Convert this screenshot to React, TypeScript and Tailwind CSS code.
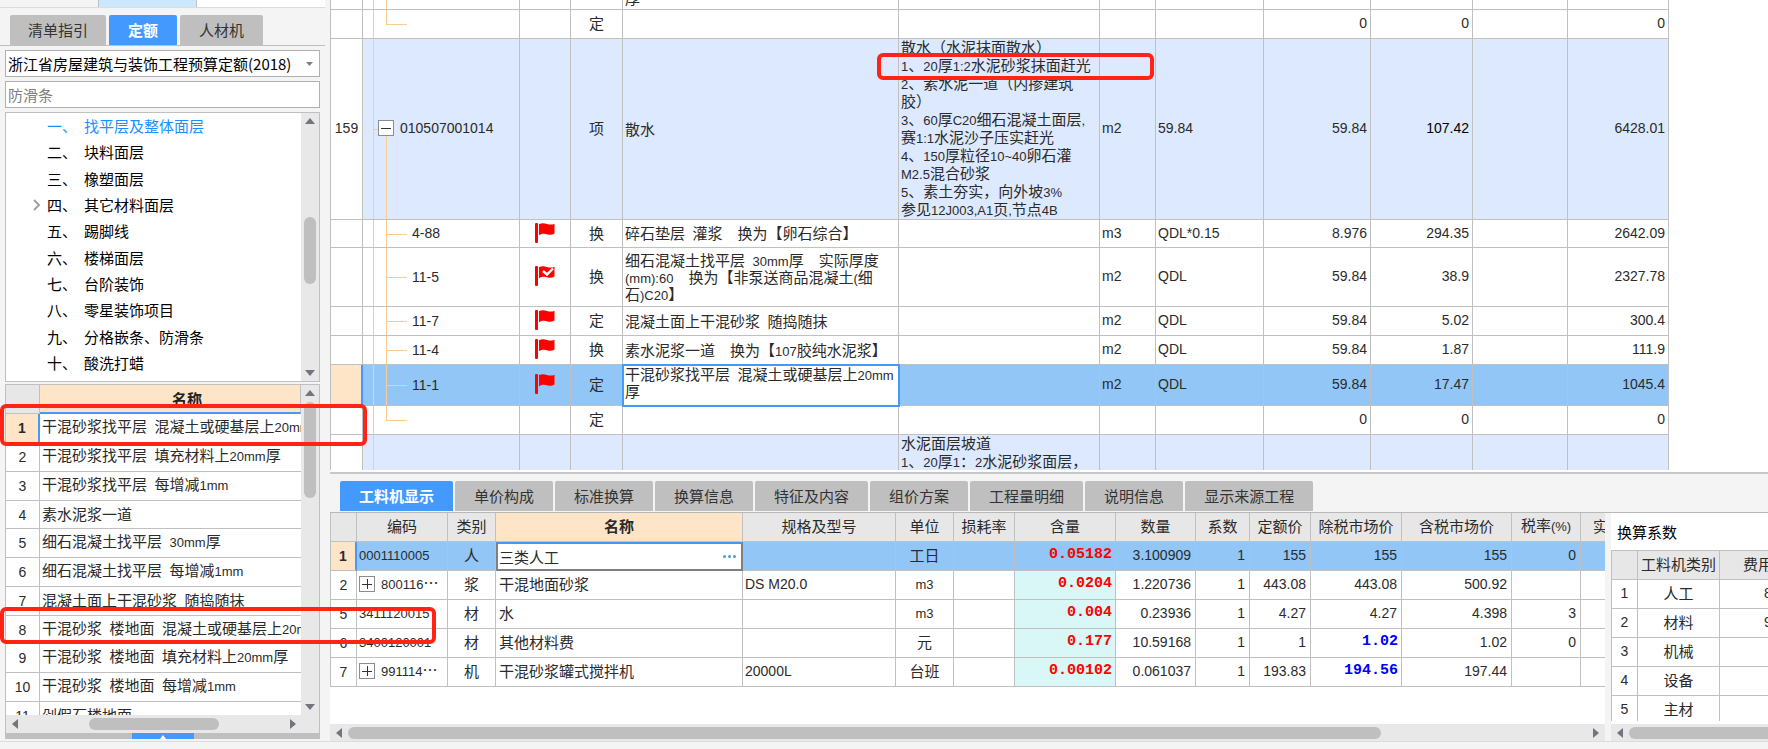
import { ReactNode, useState } from "react";
import clsx from "clsx";

const treeItems = [
  { no: "一、", name: "找平层及整体面层", active: true },
  { no: "二、", name: "块料面层" },
  { no: "三、", name: "橡塑面层" },
  { no: "四、", name: "其它材料面层", expandable: true },
  { no: "五、", name: "踢脚线" },
  { no: "六、", name: "楼梯面层" },
  { no: "七、", name: "台阶装饰" },
  { no: "八、", name: "零星装饰项目" },
  { no: "九、", name: "分格嵌条、防滑条" },
  { no: "十、", name: "酸洗打蜡" },
];

const quotas = [
  "干混砂浆找平层\u2002混凝土或硬基层上20mm",
  "干混砂浆找平层\u2002填充材料上20mm厚",
  "干混砂浆找平层\u2002每增减1mm",
  "素水泥浆一道",
  "细石混凝土找平层\u200230mm厚",
  "细石混凝土找平层\u2002每增减1mm",
  "混凝土面上干混砂浆\u2002随捣随抹",
  "干混砂浆\u2002楼地面\u2002混凝土或硬基层上20m",
  "干混砂浆\u2002楼地面\u2002填充材料上20mm厚",
  "干混砂浆\u2002楼地面\u2002每增减1mm",
  "剁假石楼地面",
];

type BillRow = {
  h: string;
  kind: "last" | "bill" | "child" | "next";
  no?: string;
  code?: string;
  flag?: "plain" | "checked";
  type?: string;
  name?: string[];
  feature?: string[];
  unit?: string;
  expr?: string;
  qty?: string;
  price?: string;
  total?: string;
  selected?: boolean;
};

const billRows: BillRow[] = [
  { h: "h-[29px]", kind: "last", type: "定", qty: "0", price: "0", total: "0" },
  {
    h: "h-[181px]",
    kind: "bill",
    no: "159",
    code: "010507001014",
    type: "项",
    name: ["散水"],
    feature: [
      "散水（水泥抹面散水）",
      "1、20厚1:2水泥砂浆抹面赶光",
      "2、素水泥一道（内掺建筑",
      "胶）",
      "3、60厚C20细石混凝土面层,",
      "赛1:1水泥沙子压实赶光",
      "4、150厚粒径10~40卵石灌",
      "M2.5混合砂浆",
      "5、素土夯实，向外坡3%",
      "参见12J003,A1页,节点4B",
    ],
    unit: "m2",
    expr: "59.84",
    qty: "59.84",
    price: "107.42",
    total: "6428.01",
  },
  {
    h: "h-[28px]", kind: "child", code: "4-88", flag: "plain", type: "换",
    name: ["碎石垫层\u2002灌浆　换为【卵石综合】"],
    unit: "m3", expr: "QDL*0.15", qty: "8.976", price: "294.35", total: "2642.09",
  },
  {
    h: "h-[59px]", kind: "child", code: "11-5", flag: "checked", type: "换",
    name: ["细石混凝土找平层\u200230mm厚　实际厚度", "(mm):60　换为【非泵送商品混凝土(细", "石)C20】"],
    unit: "m2", expr: "QDL", qty: "59.84", price: "38.9", total: "2327.78",
  },
  {
    h: "h-[29px]", kind: "child", code: "11-7", flag: "plain", type: "定",
    name: ["混凝土面上干混砂浆\u2002随捣随抹"],
    unit: "m2", expr: "QDL", qty: "59.84", price: "5.02", total: "300.4",
  },
  {
    h: "h-[29px]", kind: "child", code: "11-4", flag: "plain", type: "换",
    name: ["素水泥浆一道　换为【107胶纯水泥浆】"],
    unit: "m2", expr: "QDL", qty: "59.84", price: "1.87", total: "111.9",
  },
  {
    h: "h-[41px]", kind: "child", code: "11-1", flag: "plain", type: "定",
    name: ["干混砂浆找平层\u2002混凝土或硬基层上20mm", "厚"],
    unit: "m2", expr: "QDL", qty: "59.84", price: "17.47", total: "1045.4", selected: true,
  },
  { h: "h-[29px]", kind: "last", type: "定", qty: "0", price: "0", total: "0" },
  { h: "h-[38px]", kind: "next", feature: ["水泥面层坡道", "1、20厚1：2水泥砂浆面层，"] },
];

const billCols = [
  "w-[32px]", "w-[157px]", "w-[51px]", "w-[52px]", "w-[276px]", "w-[201px]",
  "w-[56px]", "w-[108px]", "w-[107px]", "w-[102px]", "w-[95px]", "w-[101px]",
];

const detailTabs = [
  "工料机显示", "单价构成", "标准换算", "换算信息", "特征及内容",
  "组价方案", "工程量明细", "说明信息", "显示来源工程",
];

const detailCols = [
  { w: "w-[26px]", label: "" },
  { w: "w-[91px]", label: "编码" },
  { w: "w-[48px]", label: "类别" },
  { w: "w-[247px]", label: "名称" },
  { w: "w-[153px]", label: "规格及型号" },
  { w: "w-[58px]", label: "单位" },
  { w: "w-[61px]", label: "损耗率" },
  { w: "w-[101px]", label: "含量" },
  { w: "w-[80px]", label: "数量" },
  { w: "w-[54px]", label: "系数" },
  { w: "w-[61px]", label: "定额价" },
  { w: "w-[91px]", label: "除税市场价" },
  { w: "w-[110px]", label: "含税市场价" },
  { w: "w-[69px]", label: "税率(%)" },
  { w: "w-[100px]", label: "实" },
];

const details = [
  { no: 1, code: "0001110005", type: "人", name: "三类人工", spec: "", unit: "工日", content: "0.05182", qty: "3.100909", base: "155", net: "155", gross: "155", tax: "0", selected: true },
  { no: 2, code: "800116…", open: true, type: "浆", name: "干混地面砂浆", spec: "DS M20.0", unit: "m3", content: "0.0204", qty: "1.220736", base: "443.08", net: "443.08", gross: "500.92", tax: "" },
  { no: 5, code: "3411120015", type: "材", name: "水", spec: "", unit: "m3", content: "0.004", qty: "0.23936", base: "4.27", net: "4.27", gross: "4.398", tax: "3" },
  { no: 6, code: "3400120001", type: "材", name: "其他材料费", spec: "", unit: "元", content: "0.177", qty: "10.59168", base: "1", net: "1.02", changed: true, gross: "1.02", tax: "0" },
  { no: 7, code: "991114…", open: true, type: "机", name: "干混砂浆罐式搅拌机", spec: "20000L", unit: "台班", content: "0.00102", qty: "0.061037", base: "193.83", net: "194.56", changed: true, gross: "197.44", tax: "" },
];

const factors = [
  ["人工", "8"],
  ["材料", "9"],
  ["机械", ""],
  ["设备", ""],
  ["主材", ""],
];

const plainCell = "border-r border-b border-[#c0c0c0] px-0 pt-0 whitespace-nowrap overflow-hidden";
const cell = plainCell + " pb-[2px]";
const num = "font-['Liberation_Sans','Noto_Sans_CJK_SC',sans-serif] text-[14px]";

// Latin letters and digits are set smaller than the Chinese around them
const Mixed = ({ text }: { text: string }) => (
  <>
    {text.split(/([!-~]+)/).map((part, i) =>
      i % 2 ? (
        <span key={i} className="font-['Liberation_Sans',sans-serif] text-[13px]">{part}</span>
      ) : (
        part
      )
    )}
  </>
);

const Lines = ({ lines = [], loose }: { lines?: string[]; loose?: boolean }) => (
  <>
    {lines.map((line) => (
      <div key={line} className={loose ? "h-[18px] leading-[16px]" : "h-[17px] leading-[17px]"}>
        <Mixed text={line} />
      </div>
    ))}
  </>
);

const Arrow = ({ dir }: { dir: "up" | "down" | "left" | "right" }) => {
  const points = {
    up: "0,8 5,2 10,8",
    down: "0,2 5,8 10,2",
    left: "8,0 2,5 8,10",
    right: "2,0 8,5 2,10",
  };
  return (
    <svg width="10" height="10" viewBox="0 0 10 10">
      <polygon points={points[dir]} fill="#74747c" />
    </svg>
  );
};

const Flag = ({ checked }: { checked?: boolean }) => (
  <svg width="20" height="20" viewBox="0 0 20 20" className="mx-auto">
    <rect x="0" y="0" width="3" height="20" rx="1" fill="#ff0000" />
    <path d="M4 1C7 -0.3 9.5 0 12 1C15 2 17.500 1.600 19.500 0.700V10.500C17 12 14.500 12 12 11.200C9.500 10.300 7 10.400 4 12.200Z" fill="#ff0000" />
    {checked && <path d="M8 5L12 8.500L18 2.500" fill="none" stroke="#fff" strokeWidth="2.400" />}
  </svg>
);

const TreeBox = ({ open }: { open?: boolean }) => (
  <button
    aria-label={open ? "收起" : "展开"}
    className="relative flex size-4 shrink-0 items-center justify-center border border-[#8c8c8c] bg-white"
  >
    <svg width="10" height="10" viewBox="0 0 10 10" stroke="#333" shapeRendering="crispEdges">
      <path d={open ? "M0 5.500H10" : "M0 5.500H10M5.500 0V10"} />
    </svg>
  </button>
);

const VScroll = ({ children }: { children: ReactNode }) => (
  <div className="flex w-[18px] shrink-0 flex-col items-center justify-between bg-[#e8e8e8] py-[3px]">
    <button aria-label="向上"><Arrow dir="up" /></button>
    <div className="w-3 flex-1">{children}</div>
    <button aria-label="向下"><Arrow dir="down" /></button>
  </div>
);

const Guides = ({ kind }: { kind: BillRow["kind"] | "rest" }) => (
  <>
    <span className="absolute inset-y-0 left-[10px] w-px bg-[#fccb8f]" />
    {kind === "bill" && (
      <>
        <span className="absolute top-1/2 left-[10px] h-px w-2 bg-[#fccb8f]" />
        <span className="absolute top-1/2 bottom-0 left-[23px] w-px bg-[#fccb8f]" />
      </>
    )}
    {(kind === "child" || kind === "rest") && (
      <span className="absolute inset-y-0 left-[23px] w-px bg-[#fccb8f]" />
    )}
    {kind === "last" && <span className="absolute top-0 left-[23px] h-1/2 w-px bg-[#fccb8f]" />}
    {(kind === "child" || kind === "last") && (
      <span className="absolute top-1/2 left-[23px] h-px w-[21px] bg-[#fccb8f]" />
    )}
  </>
);

const Sidebar = () => (
  <aside className="flex w-[330px] shrink-0 flex-col pr-[5px]">
    <div className="flex h-2 shrink-0 border-b border-[#dcdcdc] pl-[98px]">
      <div className="w-[99px] border-x border-[#c0c0c0] bg-[#cce8ff]" />
      <div className="flex-1 bg-white" />
    </div>
    <div className="flex h-[38px] shrink-0 items-end gap-[3px] border-b border-[#c0c0c0] pl-[10px] text-[#333]">
      <button className="h-[30px] rounded-t-xs bg-[#bfbfbf] px-[18px]">清单指引</button>
      <button className="h-[30px] rounded-t-xs bg-[#4499ff] px-[19px] font-bold text-white">定额</button>
      <button className="h-[30px] rounded-t-xs bg-[#bfbfbf] px-[19px]">人材机</button>
    </div>
    <div className="flex min-h-0 flex-1 flex-col pr-[5px] pl-[5px]">
      <div className="relative mt-1 h-[27px] shrink-0">
        <select aria-label="定额库" className="h-full w-full appearance-none border border-[#b0b0b0] bg-white pl-[2px] text-black">
          <option>浙江省房屋建筑与装饰工程预算定额(2018)</option>
        </select>
        <svg width="7" height="4" viewBox="0 0 7 4" className="pointer-events-none absolute top-3 right-[7px]">
          <polygon points="0,0 7,0 3.500,4" fill="#808080" />
        </svg>
      </div>
      <input aria-label="搜索" defaultValue="防滑条" className="mt-1 h-[27px] w-full shrink-0 border border-[#b0b0b0] bg-white px-[2px] text-[#808080]" />
      <div className="mt-1 flex h-[270px] shrink-0 border border-[#c0c0c0] bg-white">
        <ul className="flex flex-1 flex-col pb-[5px] text-black">
          {treeItems.map((item) => (
            <li key={item.no} className={clsx("flex flex-1 items-center pl-[27px]", item.active && "text-[#1890ff]")}>
              <span className="w-[14px]">
                {item.expandable && (
                  <svg width="8" height="12" viewBox="0 0 8 12" fill="none" stroke="#a0a0a0" strokeWidth="2">
                    <path d="M1 1L6 6L1 11" />
                  </svg>
                )}
              </span>
              <span className="w-[37px]">{item.no}</span>
              {item.name}
            </li>
          ))}
        </ul>
        <VScroll>
          <div className="mt-[91px] h-[67px] rounded-full bg-[#bfbfbf]" />
        </VScroll>
      </div>
      <div className="mt-[2px] flex min-h-0 flex-1 border-x border-t border-[#c0c0c0] bg-white">
        <div className="min-w-0 flex-1 overflow-hidden">
          <table className="w-full table-fixed border-separate border-spacing-0">
            <thead>
              <tr className="h-[29px]">
                <th className={clsx(plainCell, "w-[34px] bg-[#e7e7e7]")} />
                <th className={clsx(plainCell, "border-b-2 border-b-[#4499ff] bg-[#fee5c8] pl-[34px] text-[#222]")}>名称</th>
              </tr>
            </thead>
            <tbody>
              {quotas.map((name, i) => (
                <tr key={name} className={i % 4 === 3 ? "h-[28px]" : "h-[29px]"}>
                  <td className={clsx(plainCell, num, "text-center", i === 0 && "border-r-2 border-r-[#4499ff] bg-[#fee5c8] font-bold")}>{i + 1}</td>
                  <td className={clsx(cell, "border-r-0 pl-[2px]")}><Mixed text={name} /></td>
                </tr>
              ))}
            </tbody>
          </table>
        </div>
        <VScroll>
          <div className="mt-1 h-[96px] rounded-full bg-[#bfbfbf]" />
        </VScroll>
      </div>
      <div className="flex h-[18px] shrink-0 items-center border-x border-[#c0c0c0] bg-[#e8e8e8] pl-1">
        <button aria-label="向左"><Arrow dir="left" /></button>
        <div className="flex-1 px-[69px]"><div className="h-3 w-[130px] rounded-full bg-[#bfbfbf]" /></div>
        <button aria-label="向右" className="mr-[22px]"><Arrow dir="right" /></button>
      </div>
      <div className="mb-[2px] flex h-[6px] shrink-0 justify-center bg-[#bfbfbf]">
        <button aria-label="收起面板" className="flex h-[6px] w-[62px] items-end justify-center bg-[#4499ff]">
          <svg width="6" height="4" viewBox="0 0 6 4"><polygon points="0,4 3,0 6,4" fill="#fff" /></svg>
        </button>
      </div>
    </div>
  </aside>
);

const BillTable = () => (
  <table className="w-[1339px] table-fixed border-separate border-spacing-0 border-l border-[#c0c0c0]">
    <colgroup>
      {billCols.map((w, i) => <col key={i} className={w} />)}
    </colgroup>
    <tbody>
      <tr className="h-[10px]">
        {billCols.map((_, i) => (
          <td key={i} className={clsx(plainCell, "relative")}>
            {i === 1 && <Guides kind="rest" />}
            {i === 4 && <div className="flex h-[9px] items-end overflow-hidden pb-[3px] pl-[2px] leading-[17px]">厚</div>}
          </td>
        ))}
      </tr>
      {billRows.map((row, i) => {
        const tint = row.selected ? "bg-[#91c6f7]" : row.kind === "bill" || row.kind === "next" ? "bg-[#dde9fe]" : "";
        const c = clsx(cell, tint);
        return (
          <tr key={i} className={row.h}>
            <td className={clsx(cell, num, "text-center", row.selected && "border-r-2 border-r-[#4499ff] bg-[#fee5c8]")}>{row.no}</td>
            <td className={clsx(c, "relative")}>
              <Guides kind={row.kind} />
              {row.kind === "bill" ? (
                <div className="flex items-center gap-[6px] pl-[15px]">
                  <TreeBox open />
                  <span className={num}>{row.code}</span>
                </div>
              ) : (
                <span className={clsx(num, "pl-[49px]")}>{row.code}</span>
              )}
            </td>
            <td className={c}>{row.flag && <Flag checked={row.flag === "checked"} />}</td>
            <td className={clsx(c, "text-center")}>{row.type}</td>
            <td className={clsx(row.selected ? cell : c, "pl-[2px]", row.selected && "bg-white align-top outline-2 -outline-offset-1 outline-[#4499ff]")}>
              <Lines lines={row.name} />
            </td>
            <td className={clsx(plainCell, tint, "pl-[2px] align-top")}><Lines lines={row.feature} loose /></td>
            <td className={clsx(c, num, "pl-[2px]")}>{row.unit}</td>
            <td className={clsx(c, num, "pl-[2px]")}>{row.expr}</td>
            <td className={clsx(c, num, "pr-[3px] text-right")}>{row.qty}</td>
            <td className={clsx(c, num, "pr-[3px] text-right", row.kind === "bill" && "text-black")}>{row.price}</td>
            <td className={c} />
            <td className={clsx(c, num, "pr-[3px] text-right")}>{row.total}</td>
          </tr>
        );
      })}
    </tbody>
  </table>
);

const DetailTable = () => (
  <table className="w-[1351px] table-fixed border-separate border-spacing-0 border-l border-[#c0c0c0]">
    <thead>
      <tr className="h-[29px]">
        {detailCols.map((col, i) => (
          <th
            key={i}
            className={clsx(cell, col.w, i === 3 ? "bg-[#fee5c8] font-bold" : "bg-[#e7e7e7] font-normal", i === 14 && "pl-3 text-left")}
          >
            <Mixed text={col.label} />
          </th>
        ))}
      </tr>
    </thead>
    <tbody>
      {details.map((row) => {
        const c = clsx(cell, row.selected && "bg-[#91c6f7]");
        const n = clsx(c, num, "pr-1 text-right");
        return (
          <tr key={row.no} className="h-[29px]">
            <td className={clsx(plainCell, num, "text-center", row.selected && "border-r-2 border-r-[#4499ff] bg-[#fee5c8] font-bold")}>{row.no}</td>
            <td className={clsx(c, "pl-[2px]")}>
              <div className="flex items-center gap-[6px]">
                {row.open && <TreeBox />}
                <span><Mixed text={row.code} /></span>
              </div>
            </td>
            <td className={clsx(c, "text-center")}>{row.type}</td>
            {row.selected ? (
              <td className="border-2 border-[#808080] border-t-[#4499ff] bg-white p-0">
                <div className="flex items-center justify-between pr-[5px] pl-px">
                  {row.name}
                  <button aria-label="更多" className="flex gap-[2px]">
                    <span className="size-[3px] rounded-full bg-[#4a9bd9]" />
                    <span className="size-[3px] rounded-full bg-[#4a9bd9]" />
                    <span className="size-[3px] rounded-full bg-[#4a9bd9]" />
                  </button>
                </div>
              </td>
            ) : (
              <td className={clsx(c, "pl-[3px]")}>{row.name}</td>
            )}
            <td className={clsx(c, num, "pl-[2px]")}>{row.spec}</td>
            <td className={clsx(c, "text-center")}><Mixed text={row.unit} /></td>
            <td className={c} />
            <td className={clsx(cell, "pr-[3px] text-right font-['Liberation_Mono',monospace] font-bold text-[#ff0000]", row.selected ? "bg-[#91c6f7]" : "bg-[#daf7f7]")}>{row.content}</td>
            <td className={n}>{row.qty}</td>
            <td className={n}>1</td>
            <td className={n}>{row.base}</td>
            <td className={row.changed ? clsx(c, "pr-[3px] text-right font-['Liberation_Mono',monospace] font-bold text-[#0000ff]") : n}>{row.net}</td>
            <td className={n}>{row.gross}</td>
            <td className={n}>{row.tax}</td>
            <td className={c} />
          </tr>
        );
      })}
    </tbody>
  </table>
);

const FactorPanel = () => (
  <section className="flex w-[157px] shrink-0 flex-col overflow-hidden bg-white">
    <h3 className="flex h-[37px] shrink-0 items-center pl-[6px] text-black">换算系数</h3>
    <div className="min-h-0 flex-1 overflow-hidden pb-[3px]">
      <div className="h-full overflow-hidden">
        <table className="w-[229px] table-fixed border-separate border-spacing-0 border-t border-l border-[#c0c0c0]">
          <thead>
            <tr className="h-[29px]">
              <th className={clsx(cell, "w-[26px] bg-[#e7e7e7]")} />
              <th className={clsx(cell, "w-[82px] bg-[#e7e7e7] font-normal")}>工料机类别</th>
              <th className={clsx(cell, "w-[120px] bg-[#e7e7e7] pl-[23px] text-left font-normal")}>费用</th>
            </tr>
          </thead>
          <tbody>
            {factors.map(([name, value], i) => (
              <tr key={name} className="h-[29px]">
                <td className={clsx(cell, num, "text-center")}>{i + 1}</td>
                <td className={clsx(cell, "text-center")}>{name}</td>
                <td className={clsx(cell, num, "pl-11")}>{value}</td>
              </tr>
            ))}
          </tbody>
        </table>
      </div>
    </div>
    <div className="flex h-[17px] shrink-0 items-center gap-1 bg-[#e8e8e8] pl-1">
      <button aria-label="向左"><Arrow dir="left" /></button>
      <div className="h-3 flex-1 rounded-l-full bg-[#bfbfbf]" />
    </div>
  </section>
);

const App = () => {
  const [tab, setTab] = useState(detailTabs[0]);

  return (
    <div className="relative flex h-screen flex-col overflow-hidden bg-[#f4f4f4] font-['Noto_Sans_CJK_SC',sans-serif] text-[15px] leading-[20px] text-[#2b2b2b]">
      <div className="flex min-h-0 flex-1">
        <Sidebar />
        <main className="flex min-w-0 flex-1 flex-col">
          <section className="min-h-0 flex-1 overflow-hidden border-b-2 border-[#c8c8c8] bg-white pb-[2px]">
            <div className="h-full overflow-hidden">
              <BillTable />
            </div>
          </section>
          <nav className="flex h-[39px] shrink-0 items-end gap-[2px] border-b border-[#b8b8b8] pb-px pl-[10px]">
            {detailTabs.map((name) => (
              <button
                key={name}
                onClick={() => setTab(name)}
                className={clsx(
                  "h-[30px] rounded-t-xs px-[19px]",
                  tab === name ? "bg-[#4499ff] font-bold text-white" : "bg-[#bfbfbf] text-[#333]"
                )}
              >
                {name}
              </button>
            ))}
          </nav>
          <div className="flex h-[228px] shrink-0">
            <section className="flex min-w-0 flex-1 flex-col bg-white">
              <div className="min-h-0 flex-1 overflow-hidden">
                <DetailTable />
              </div>
              <div className="flex h-[17px] shrink-0 items-center gap-1 bg-[#e8e8e8] px-1">
                <button aria-label="向左"><Arrow dir="left" /></button>
                <div className="flex-1"><div className="h-3 w-5/6 rounded-full bg-[#bfbfbf]" /></div>
                <button aria-label="向右"><Arrow dir="right" /></button>
              </div>
            </section>
            <div className="w-[6px] shrink-0" />
            <FactorPanel />
          </div>
        </main>
      </div>
      <footer className="h-2 shrink-0 border-t border-[#dcdcdc]" />

      {/* red review marks */}
      <div className="pointer-events-none absolute top-[404px] left-0 h-[42px] w-[367px] rounded-md border-4 border-[#ff2414]" />
      <div className="pointer-events-none absolute top-[607px] left-0 h-[37px] w-[436px] rounded-md border-4 border-[#ff2414]" />
      <div className="pointer-events-none absolute top-[53px] left-[877px] h-[27px] w-[277px] rounded-md border-4 border-[#ff2414]" />
    </div>
  );
};

export default App;
